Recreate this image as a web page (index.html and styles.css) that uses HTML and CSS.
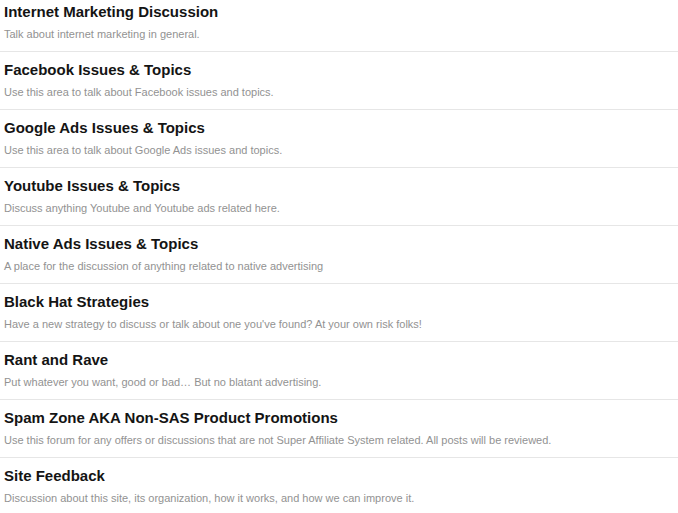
FILE: index.html
```html
<!DOCTYPE html>
<html>
<head>
<meta charset="utf-8">
<link rel="stylesheet" href="styles.css">
</head>
<body>
<div class="list">
  <div class="row"><div class="title">Internet Marketing Discussion</div><div class="desc">Talk about internet marketing in general.</div></div>
  <div class="row"><div class="title">Facebook Issues &amp; Topics</div><div class="desc">Use this area to talk about Facebook issues and topics.</div></div>
  <div class="row"><div class="title">Google Ads Issues &amp; Topics</div><div class="desc">Use this area to talk about Google Ads issues and topics.</div></div>
  <div class="row"><div class="title">Youtube Issues &amp; Topics</div><div class="desc">Discuss anything Youtube and Youtube ads related here.</div></div>
  <div class="row"><div class="title">Native Ads Issues &amp; Topics</div><div class="desc">A place for the discussion of anything related to native advertising</div></div>
  <div class="row"><div class="title">Black Hat Strategies</div><div class="desc">Have a new strategy to discuss or talk about one you've found? At your own risk folks!</div></div>
  <div class="row"><div class="title">Rant and Rave</div><div class="desc">Put whatever you want, good or bad… But no blatant advertising.</div></div>
  <div class="row"><div class="title">Spam Zone AKA Non-SAS Product Promotions</div><div class="desc">Use this forum for any offers or discussions that are not Super Affiliate System related. All posts will be reviewed.</div></div>
  <div class="row"><div class="title">Site Feedback</div><div class="desc">Discussion about this site, its organization, how it works, and how we can improve it.</div></div>
</div>
</body>
</html>
```
FILE: styles.css
```css
html, body {
  margin: 0;
  padding: 0;
  background: #ffffff;
  overflow: hidden;
}
.list {
  margin-top: -6px;
  font-family: "Liberation Sans", Arial, sans-serif;
}
.row {
  padding: 9px 4px 10px 4px;
  border-bottom: 1px solid #e6e6e6;
}
.title {
  font-size: 15px;
  line-height: 18px;
  font-weight: bold;
  color: #141414;
}
.desc {
  margin-top: 7px;
  font-size: 11px;
  line-height: 13px;
  color: #929292;
}
```
